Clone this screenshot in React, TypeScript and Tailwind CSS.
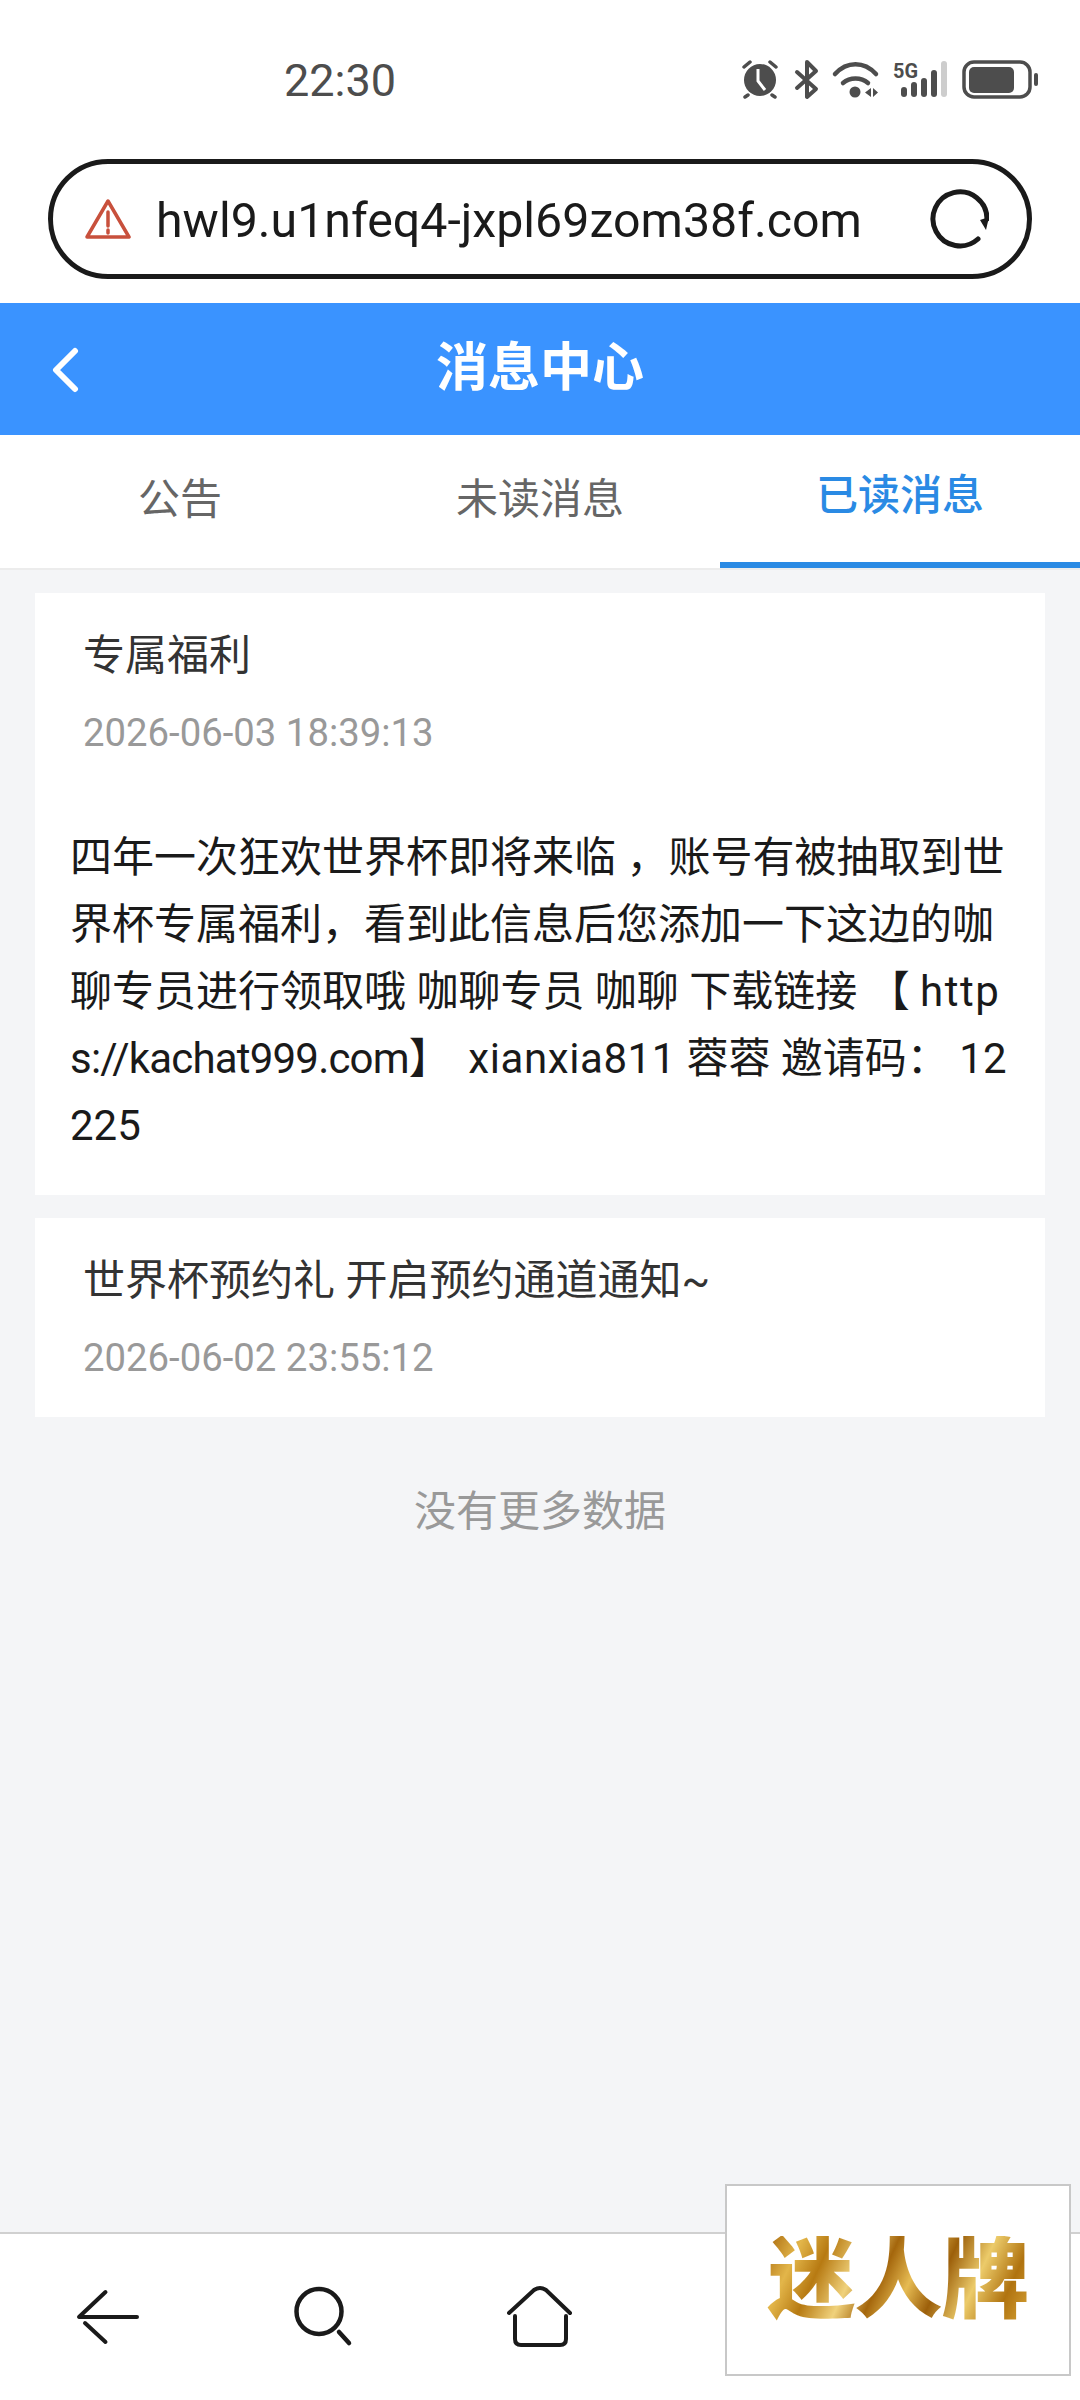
const cjk = "font-['Roboto','Noto_Sans_CJK_SC',sans-serif]";

function StatusIcons() {
  return (
    <svg width="300" height="44" viewBox="0 0 300 44" className="text-[#4d4d4d]">
      {/* alarm */}
      <circle cx="18" cy="20" r="16" fill="currentColor" />
      <path d="M2 7l6-5M34 7l-6-5M6 35l-3 2M30 35l3 2" stroke="currentColor" strokeWidth="3.5" strokeLinecap="round" fill="none" />
      <path d="M16 9v12l7 9" stroke="#fff" strokeWidth="3" fill="none" />
      {/* bluetooth */}
      <path d="M55 12l19 17-9 8V2l9 9-19 17" stroke="currentColor" strokeWidth="4" fill="none" strokeLinejoin="round" strokeLinecap="round" />
      {/* wifi */}
      <g stroke="currentColor" strokeWidth="4.5" fill="none" strokeLinecap="round">
        <path d="M93 14c12-13 29-13 41 0" />
        <path d="M101 23c7-6 18-6 25 0" />
      </g>
      <circle cx="113" cy="32" r="5.5" fill="currentColor" />
      <path d="M129 28v9l-6-4.500zM131 28v9l5-4.500z" fill="currentColor" />
      {/* 5G */}
      <text x="151" y="18" fontSize="21" fontWeight="700" fill="currentColor" fontFamily="Roboto" textLength="25" lengthAdjust="spacingAndGlyphs">5G</text>
      <g fill="currentColor">
        <rect x="159" y="27" width="6" height="10" rx="3" />
        <rect x="169" y="22" width="6" height="15" rx="3" />
        <rect x="179" y="18" width="6" height="19" rx="3" />
        <rect x="189" y="10" width="6" height="27" rx="3" />
        <rect x="199" y="1" width="6" height="36" rx="3" fill="#cdcdcd" />
      </g>
      {/* battery */}
      <rect x="222" y="2" width="66" height="35" rx="10" stroke="currentColor" strokeWidth="3.500" fill="none" />
      <rect x="227" y="7" width="45" height="26" rx="5" fill="currentColor" />
      <rect x="292" y="13" width="4" height="13" rx="2" fill="currentColor" />
    </svg>
  );
}

function Card({ title, date, children }: { title: string; date: string; children?: React.ReactNode }) {
  return (
    <div className="bg-white px-[35px] pb-[36px]">
      <div className="pl-[13px] pt-[38px] text-[42px] leading-[50px] text-[#333]">{title}</div>
      <div className="pl-[13px] mt-[29px] text-[38.3px] leading-[46px] text-[#999]">{date}</div>
      {children}
    </div>
  );
}

export default function App() {
  return (
    <div className={`${cjk} w-[1080px] h-[2400px] bg-[#f4f5f7] flex flex-col relative overflow-hidden`}>
      {/* status bar */}
      <div className="bg-white h-[159px] flex items-start pt-[56px]">
        <div className="ml-[284px] text-[45px] leading-[50px] text-[#4d4d4d]">22:30</div>
        <div className="ml-auto mr-[38px] mt-[4px]">
          <StatusIcons />
        </div>
      </div>

      {/* url bar */}
      <div className="bg-white h-[144px] px-[48px]">
        <div className="h-[120px] border-[5px] border-[#1a1a1a] rounded-[60px] flex items-center pl-[32px] pr-[38px]">
          <svg width="46" height="42" viewBox="0 0 46 42" fill="none" stroke="#c8503c" strokeWidth="3.5" strokeLinejoin="round">
            <path d="M23 3L44 39H2z" />
            <path d="M23 14v14M23 32v3" strokeLinecap="round" />
          </svg>
          <div className="ml-[25px] pt-[4px] text-[48.3px] leading-[60px] text-[#1a1a1a] whitespace-nowrap">hwl9.u1nfeq4-jxpl69zom38f.com</div>
          <svg className="ml-auto" width="60" height="60" viewBox="0 0 60 60" fill="none">
            <path d="M49 50A27 27 0 1 1 58 30" stroke="#1a1a1a" strokeWidth="5" strokeLinecap="round" />
            <path d="M51 31L60 28L57 41z" fill="#1a1a1a" />
          </svg>
        </div>
      </div>

      {/* header */}
      <div className="h-[132px] bg-[#3a93ff] flex items-center justify-center relative">
        <svg className="absolute left-[50px] top-[44px]" width="32" height="46" viewBox="0 0 32 46" fill="none" stroke="#fff" strokeWidth="6" strokeLinecap="round" strokeLinejoin="round">
          <path d="M25 4L6 23l19 19" />
        </svg>
        <div className="text-[52px] leading-[60px] font-bold text-white">消息中心</div>
      </div>

      {/* tabs */}
      <div className="h-[135px] bg-white flex border-b-2 border-[#ececec]">
        <div className="flex-1 flex items-center justify-center text-[42px] text-[#666] pb-[4px]">公告</div>
        <div className="flex-1 flex items-center justify-center text-[42px] text-[#666] pb-[4px]">未读消息</div>
        <div className="flex-1 flex items-center justify-center text-[42px] font-medium text-[#2a8ae4] border-b-[6px] border-[#2a8ae4] pb-[6px]">已读消息</div>
      </div>

      {/* list */}
      <div className="flex-1 px-[35px] pt-[23px] flex flex-col gap-[23px]">
        <Card title="专属福利" date="2026-06-03 18:39:13">
          <div className="pt-[68px] text-[42px] leading-[67px] text-[#1a1a1a] break-all">
            四年一次狂欢世界杯即将来临 ，账号有被抽取到世界杯专属福利，看到此信息后您添加一下这边的咖聊专员进行领取哦 咖聊专员 咖聊 下载链接 【 <span className="tracking-[1.5px]">http</span><span className="tracking-[-0.8px]">s://kachat999.com</span>】 <span className="ml-[7px] tracking-[0.6px]">xianxia811</span> 蓉蓉 邀请码： 12225
          </div>
        </Card>
        <Card title="世界杯预约礼 开启预约通道通知~" date="2026-06-02 23:55:12" />
        <div className="text-center text-[42px] leading-[50px] text-[#999] mt-[47px]">没有更多数据</div>
      </div>

      {/* bottom bar */}
      <div className="h-[168px] bg-white border-t-2 border-[#d0d0d0] flex items-start pt-[50px]">
        <svg className="ml-[76px] mt-[3px]" width="64" height="60" viewBox="0 0 64 60" fill="none" stroke="#1a1a1a" strokeWidth="4" strokeLinecap="round" strokeLinejoin="round">
          <path d="M29.500 5L3 30h58" />
          <path d="M9 36l20.500 19" />
        </svg>
        <svg className="ml-[153px] mt-[1px]" width="62" height="62" viewBox="0 0 62 62" fill="none" stroke="#1a1a1a" strokeWidth="4.500" strokeLinecap="round">
          <circle cx="26" cy="26.500" r="22.500" />
          <path d="M46 47l10 11" />
        </svg>
        <svg className="ml-[152px]" width="66" height="66" viewBox="0 0 66 66" fill="none" stroke="#1a1a1a" strokeWidth="4" strokeLinecap="round" strokeLinejoin="round">
          <path d="M2 29L27 6q6-4 12 0L63 29" />
          <path d="M8 32v23q0 6 6 6h39q6 0 6-6V32" />
        </svg>
      </div>

      {/* floating logo */}
      <div className="absolute left-[725px] top-[2184px] w-[346px] h-[192px] bg-white border-2 border-[#c8c8c8] flex items-center justify-center">
        <span className="text-[88px] leading-none font-black tracking-[-1px] whitespace-nowrap bg-[linear-gradient(115deg,#a8680c_0%,#e3b64a_12%,#b77a12_22%,#f0d27c_34%,#a4660c_44%,#e6bb52_54%,#9c5f0a_64%,#eccb6a_76%,#b0730f_88%,#d9a63a_100%)] bg-clip-text text-transparent">迷人牌</span>
      </div>
    </div>
  );
}
